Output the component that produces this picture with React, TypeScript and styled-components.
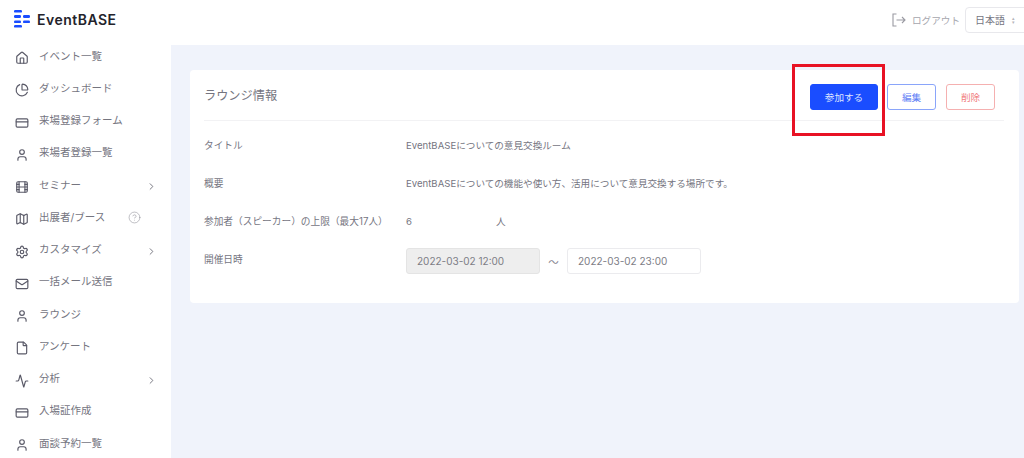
import React from "react";
import styled, { createGlobalStyle } from "styled-components";
import { House, ChartPie, CreditCard, User, Film, Map, CircleHelp, Settings, Mail, File, Activity, ChevronRight } from "lucide-react";

const Global = createGlobalStyle`
  html, body { margin: 0; padding: 0; height: 100%; overflow: hidden; background: #fff; }
  body { font-family: Inter, "Noto Sans CJK JP", sans-serif; color: #75757f; }
  * { box-sizing: border-box; }
`;
const Page = styled.div`
  position: relative; width: 1024px; height: 458px; overflow: hidden;
  display: grid; grid-template-columns: 171px 1fr; grid-template-rows: 45px 1fr;
`;
const Header = styled.header`
  grid-column: 1 / 3; display: flex; align-items: center; justify-content: space-between;
  padding: 0 0 7px 14px; background: #fff;
  position: relative; z-index: 1;
  background: transparent;
`;
const Brand = styled.div`display: flex; align-items: center; gap: 7px;`;
const BrandName = styled.span`font-size: 14px; font-weight: 600; color: #23232b; letter-spacing: 0.5px;`;
const HeaderRight = styled.div`display: flex; align-items: center; margin-right: -19px; padding-top: 1px;`;
const Logout = styled.span`display: flex; align-items: center; gap: 6px; font-size: 9.6px; color: #a6a6ad; margin-right: 5px;`;
const Lang = styled.div`
  width: 78px; height: 26px; border: 1px solid #e8e8ec; border-radius: 4px; padding-left: 9px;
  display: flex; align-items: center; gap: 7px; font-size: 10px; color: #75757f;
`;
const Updown = styled.span`font-size: 5px; line-height: 4px; color: #b5b5bb; display: flex; flex-direction: column;`;
const Sidebar = styled.nav`display: flex; flex-direction: column; margin-top: -6px; background: #fff; overflow: hidden;`;
const Item = styled.div`
  flex: none; height: 32.25px; display: flex; align-items: center; padding-left: 15px; position: relative;
  font-size: 10.5px; color: #75757f;
  svg.main { width: 14px; height: 14px; color: #5a5a68; margin-right: 10px; margin-top: 6px; flex: none; }
`;
const Chevron = styled.span`position: absolute; left: 146px; top: 13px; display: flex; color: #6f6f78;`;
const Help = styled.span`position: absolute; left: 128px; top: 11px; display: flex; color: #8a8a93;`;
const Main = styled.main`background: #f0f3fb; padding: 25px 5px 0 19px;`;
const Card = styled.section`background: #fff; border-radius: 4px; height: 233px; padding: 0 15px 0 14px;`;
const CardHead = styled.div`
  height: 51px; display: flex; align-items: center; justify-content: space-between;
  border-bottom: 1px solid #f2f2f4; padding: 0 9px 0 0;
`;
const Title = styled.h2`margin: 0; font-size: 12.2px; font-weight: 400; color: #75757f;`;
const Actions = styled.div`display: flex; gap: 9px; align-items: center; margin-top: 3px;`;
const Btn = styled.button<{ $kind: "primary" | "edit" | "danger" }>`
  height: 26px; border-radius: 3px; font: inherit; font-size: 9.6px; padding: 0;
  width: ${p => (p.$kind === "primary" ? "68px" : "49px")};
  margin-left: ${p => (p.$kind === "danger" ? "1px" : "0")};
  background: ${p => (p.$kind === "primary" ? "#1a4dff" : "#fff")};
  color: ${p => (p.$kind === "primary" ? "#dfe6ff" : p.$kind === "edit" ? "#5f80f5" : "#f08080")};
  border: 1px solid ${p => (p.$kind === "primary" ? "#1a4dff" : p.$kind === "edit" ? "#8aa5fa" : "#f5b0b0")};
`;
const Rows = styled.div`display: flex; flex-direction: column; padding-top: 5px;`;
const Row = styled.div`
  height: 38px; display: grid; grid-template-columns: 202px 1fr; align-items: center; font-size: 9.7px; color: #75757f;
`;
const Label = styled.div`white-space: nowrap;`;
const Value = styled.div`display: flex; align-items: center; white-space: nowrap; font-size: 9.6px;`;
const Person = styled.span`margin-left: 84px;`;
const DateBox = styled.div<{ $disabled?: boolean }>`
  width: 134px; height: 26px; margin-top: 4px; border-radius: 3px; display: flex; align-items: center; padding-left: 10px; font-size: 10px;
  background: ${p => (p.$disabled ? "#eeeeee" : "#fff")};
  border: 1px solid ${p => (p.$disabled ? "#e4e4e4" : "#ebebee")};
  color: #7d7d85;
`;
const Tilde = styled.span`width: 27px; margin-top: 4px; text-align: center; color: #85858e; font-size: 10.5px;`;
const Callout = styled.div`
  position: absolute; left: 792px; top: 64px; width: 93px; height: 72px; border: 3px solid #e81224; pointer-events: none;
`;

const Logo = () => (
  <svg width="16" height="18" viewBox="0 0 16 18" aria-hidden="true">
    <g fill="#1a4dff">
      <rect x="0" y="0" width="8" height="2.6" rx="1.2" />
      <rect x="0" y="5" width="7" height="3" rx="1.2" /><rect x="9" y="5" width="7" height="3" rx="1.2" />
      <rect x="0" y="10.5" width="7" height="2.6" rx="1.2" /><rect x="9" y="10.5" width="7" height="2.6" rx="1.2" />
      <rect x="0" y="15" width="8" height="2.6" rx="1.2" />
    </g>
  </svg>
);

const LogoutIcon = () => (
  <svg width="14" height="14" viewBox="0 0 14 14" fill="none" stroke="#9a9aa2" strokeWidth="1.1" aria-hidden="true">
    <path d="M4.5 1H1v12h3.5" />
    <path d="M4.5 7H13M10 4l3 3-3 3" />
  </svg>
);

const items: { label: string; Icon: React.ComponentType<any>; chev?: boolean; help?: boolean }[] = [
  { label: "イベント一覧", Icon: House },
  { label: "ダッシュボード", Icon: ChartPie },
  { label: "来場登録フォーム", Icon: CreditCard },
  { label: "来場者登録一覧", Icon: User },
  { label: "セミナー", Icon: Film, chev: true },
  { label: "出展者/ブース", Icon: Map, help: true },
  { label: "カスタマイズ", Icon: Settings, chev: true },
  { label: "一括メール送信", Icon: Mail },
  { label: "ラウンジ", Icon: User },
  { label: "アンケート", Icon: File },
  { label: "分析", Icon: Activity, chev: true },
  { label: "入場証作成", Icon: CreditCard },
  { label: "面談予約一覧", Icon: User },
];

export default function App() {
  return (
    <Page>
      <Global />
      <Header>
        <Brand><Logo /><BrandName>EventBASE</BrandName></Brand>
        <HeaderRight>
          <Logout><LogoutIcon />ログアウト</Logout>
          <Lang>日本語<Updown><span>▴</span><span>▾</span></Updown></Lang>
        </HeaderRight>
      </Header>
      <Sidebar>
        {items.map(({ label, Icon, chev, help }) => (
          <Item key={label}>
            <Icon className="main" strokeWidth={2} />
            {label}
            {chev && <Chevron><ChevronRight size={11} strokeWidth={2} /></Chevron>}
            {help && <Help><CircleHelp size={13} strokeWidth={1} /></Help>}
          </Item>
        ))}
      </Sidebar>
      <Main>
        <Card>
          <CardHead>
            <Title>ラウンジ情報</Title>
            <Actions>
              <Btn $kind="primary">参加する</Btn>
              <Btn $kind="edit">編集</Btn>
              <Btn $kind="danger">削除</Btn>
            </Actions>
          </CardHead>
          <Rows>
            <Row><Label>タイトル</Label><Value>EventBASEについての意見交換ルーム</Value></Row>
            <Row><Label>概要</Label><Value>EventBASEについての機能や使い方、活用について意見交換する場所です。</Value></Row>
            <Row><Label>参加者（スピーカー）の上限（最大17人）</Label><Value>6<Person>人</Person></Value></Row>
            <Row>
              <Label>開催日時</Label>
              <Value>
                <DateBox $disabled>2022-03-02 12:00</DateBox>
                <Tilde>～</Tilde>
                <DateBox>2022-03-02 23:00</DateBox>
              </Value>
            </Row>
          </Rows>
        </Card>
      </Main>
      <Callout />
    </Page>
  );
}
